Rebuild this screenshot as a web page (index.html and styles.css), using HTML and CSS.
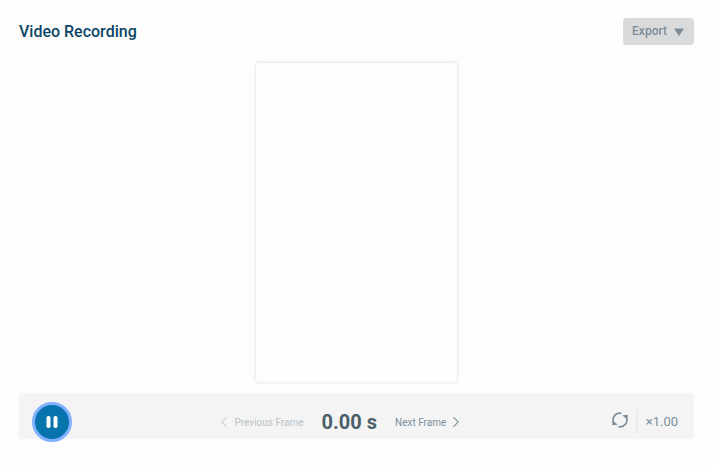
FILE: index.html
```html
<!DOCTYPE html>
<html lang="en">
<head>
<meta charset="utf-8">
<meta name="viewport" content="width=device-width, initial-scale=1">
<title>Video Recording</title>
<link rel="stylesheet" href="styles.css">
</head>
<body>
<header class="header">
  <h1 class="title">Video Recording</h1>
  <button class="export" type="button">Export
    <svg width="10" height="8" viewBox="0 0 10 8" aria-hidden="true"><path d="M0 0.5h10L5 8z" fill="currentColor"/></svg>
  </button>
</header>
<main class="stage">
  <div class="preview"></div>
</main>
<footer class="controls">
  <button class="pause" type="button" aria-label="Pause">
    <svg width="12" height="12" viewBox="0 0 12 12" aria-hidden="true"><rect x="0.5" width="4" height="12" rx="1.8" fill="currentColor"/><rect x="7.5" width="4" height="12" rx="1.8" fill="currentColor"/></svg>
  </button>
  <div class="frames">
    <button class="step" type="button" disabled>
      <svg width="6" height="10" viewBox="0 0 6 10" aria-hidden="true"><path d="M5.5 0.3L0.7 5l4.8 4.7" fill="none" stroke="currentColor"/></svg>
      Previous Frame
    </button>
    <output class="time">0.00 s</output>
    <button class="step" type="button">
      Next Frame
      <svg width="6" height="10" viewBox="0 0 6 10" aria-hidden="true"><path d="M0.5 0.3L5.3 5 0.5 9.7" fill="none" stroke="currentColor" stroke-width="1.1"/></svg>
    </button>
  </div>
  <div class="playback">
    <button class="loop" type="button" aria-label="Loop">
      <svg width="16" height="16" viewBox="0 0 16 16" fill="none" stroke="currentColor" stroke-width="1.6" aria-hidden="true">
        <path d="M2.300 11.500A6.600 6.600 0 0 1 9.500 1.400"/>
        <path d="M13.700 4.500A6.600 6.600 0 0 1 6.500 14.600"/>
        <path d="M10.300 3.300L16 2.700l-.8 4.800zM5.700 12.700L0 13.300l.8-4.800z" fill="currentColor" stroke="none"/>
      </svg>
    </button>
    <button class="speed" type="button">×1.00</button>
  </div>
</footer>
</body>
</html>
```
FILE: styles.css
```css
* {
  box-sizing: border-box;
}

body {
  display: flex;
  flex-direction: column;
  min-height: 100vh;
  margin: 0;
  padding: 18px 19px 28px;
  background: #fdfdfd;
  color: #78909c;
  font-family: Roboto, "Liberation Sans", sans-serif;
}

button {
  display: flex;
  align-items: center;
  margin: 0;
  padding: 0;
  border: 0;
  background: none;
  color: inherit;
  font: inherit;
}

svg {
  display: block;
  flex: none;
}

.header {
  display: flex;
  align-items: center;
  justify-content: space-between;
}

.title {
  margin: 0;
  color: #0b4566;
  font-size: 16px;
  font-weight: 500;
  line-height: 25px;
}

.export {
  gap: 7px;
  padding: 5px 10px 5px 9px;
  border-radius: 4px;
  background: #d9dadc;
  color: #7c8c98;
  font-size: 12px;
  font-weight: 500;
  line-height: 17px;
}

.stage {
  display: flex;
  flex: 1;
  justify-content: center;
  padding: 17px 0 10px;
}

.preview {
  width: 30%;
  border: 1px solid #f0f0f0;
  border-radius: 4px;
  box-shadow: 0 0 2px #e4e4e4;
}

.controls {
  display: flex;
  align-items: center;
  justify-content: space-between;
  padding: 12px 16px 0 13px;
  border-radius: 4px 4px 0 0;
  background: #f4f4f4;
}

.pause {
  justify-content: center;
  width: 40px;
  height: 40px;
  margin: -3px 0;
  border: 3px solid #82b1ff;
  border-radius: 50%;
  background: #0874ae;
  color: #fff;
}

.frames {
  display: flex;
  align-items: center;
  gap: 18px;
  padding-right: 3px;
}

.step {
  gap: 7px;
  font-size: 10px;
  line-height: 17px;
}

.step:disabled {
  color: #b8c3c9;
}

.time {
  color: #4b5f6a;
  font-size: 20px;
  font-weight: 700;
  line-height: 24px;
}

.playback {
  display: flex;
  align-items: center;
}

.loop {
  height: 24px;
  padding: 0 8px 4px 0;
  border-right: 2px solid #eaebec;
}

.speed {
  padding-left: 8px;
  font-size: 13px;
  line-height: 24px;
}
```
